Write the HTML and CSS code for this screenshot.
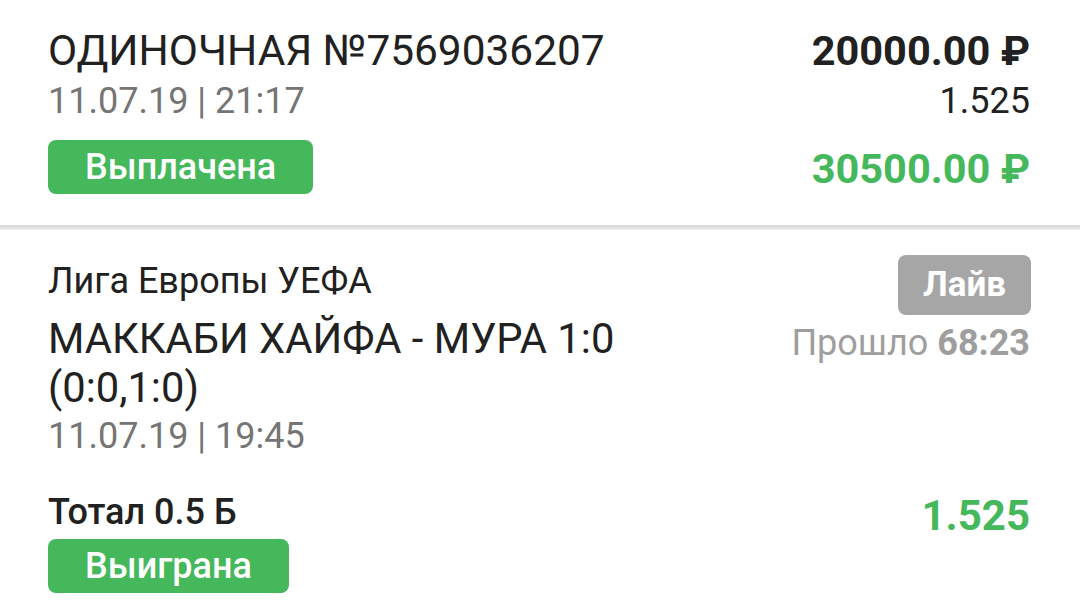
FILE: index.html
```html
<!DOCTYPE html>
<html lang="ru">
<head>
    <meta charset="UTF-8">
    <meta name="viewport" content="width=device-width, initial-scale=1.0">
    <title>Ставка №7569036207</title>
    <link rel="stylesheet" href="styles.css">
</head>
<body>
    <div class="bet-head">
        <div class="col">
            <div class="title">ОДИНОЧНАЯ №7569036207</div>
            <div class="date">11.07.19 | 21:17</div>
            <span class="badge badge-green head-badge">Выплачена</span>
        </div>
        <div class="col col-right">
            <div class="amount">20000.00 ₽</div>
            <div class="odds">1.525</div>
            <div class="amount amount-win">30500.00 ₽</div>
        </div>
    </div>
    <div class="divider"></div>

    <div class="event">
        <div class="event-row">
            <div class="col">
                <div class="league">Лига Европы УЕФА</div>
                <div class="match">МАККАБИ ХАЙФА - МУРА 1:0<br>(0:0,1:0)</div>
                <div class="date">11.07.19 | 19:45</div>
            </div>
            <div class="col col-right">
                <span class="badge badge-grey">Лайв</span>
                <div class="elapsed">Прошло <b>68:23</b></div>
            </div>
        </div>
        <div class="event-row outcome">
            <div class="col">
                <div class="market">Тотал 0.5 Б</div>
                <span class="badge badge-green">Выиграна</span>
            </div>
            <div class="col col-right">
                <div class="outcome-odds">1.525</div>
            </div>
        </div>
    </div>
</body>
</html>
```

FILE: styles.css
```css
body {
    margin: 0;
    background-color: #fff;
    color: #212121;
    font-family: Roboto, 'Noto Sans', Arial, sans-serif;
    width: 1080px;
    height: 612px;
    overflow: hidden;
}
.bet-head {
    display: flex;
    justify-content: space-between;
    padding: 25px 50px 31px 48px;
    height: 169px;
}
.col {
    display: flex;
    flex-direction: column;
    align-items: flex-start;
}
.col-right {
    align-items: flex-end;
    text-align: right;
}
.title {
    font-size: 42.4px;
    line-height: 52px;
}
.date {
    font-size: 36px;
    line-height: 48px;
    color: #757575;
}
.badge {
    display: inline-block;
    font-size: 36px;
    font-weight: 500;
    line-height: 54px;
    height: 54px;
    padding: 0 37px;
    border-radius: 8px;
    color: #fff;
}
.badge-green {
    background-color: #45b85c;
}
.head-badge {
    margin-top: 15px;
}
.badge-grey {
    background-color: #a6a6a6;
    font-weight: 700;
    font-size: 35px;
    height: 60px;
    line-height: 60px;
    padding: 0 25px;
}
.amount {
    font-size: 41.5px;
    line-height: 52px;
    font-weight: 700;
}
.amount-win {
    color: #45b85c;
    margin-top: 18px;
}
.odds {
    font-size: 36px;
    line-height: 48px;
}
.divider {
    height: 5px;
    background: linear-gradient(#d6d6d6, #efefef);
}
.event {
    padding: 0 49px 0 48px;
}
.event-row {
    display: flex;
    justify-content: space-between;
}
.event-row .col:first-child {
    padding-top: 31px;
}
.event-row .col-right {
    padding-top: 25px;
}
.league {
    font-size: 36px;
    line-height: 40px;
}
.match {
    font-size: 41.7px;
    line-height: 49px;
    margin-top: 13px;
}
.elapsed {
    font-size: 36px;
    line-height: 48px;
    color: #9e9e9e;
    margin-top: 4px;
    margin-right: 1px;
}
.elapsed b {
    font-weight: 700;
}
.outcome .col:first-child {
    padding-top: 28px;
}
.outcome .col-right {
    padding-top: 30px;
}
.market {
    font-size: 36px;
    line-height: 48px;
    font-weight: 500;
    margin-bottom: 3px;
}
.outcome-odds {
    font-size: 42px;
    line-height: 52px;
    font-weight: 700;
    color: #45b85c;
    margin-right: 1px;
}
```
